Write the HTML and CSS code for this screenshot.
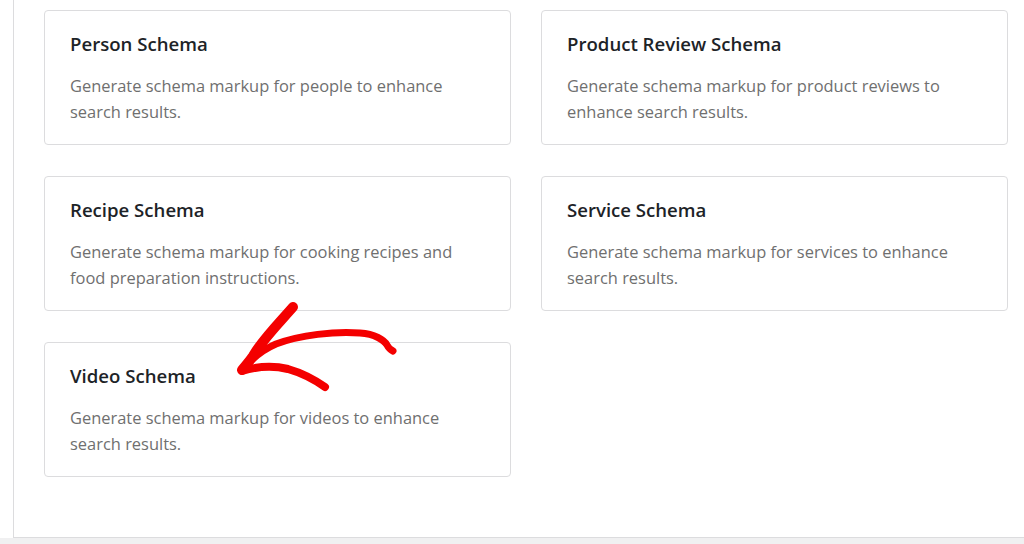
FILE: index.html
```html
<!DOCTYPE html>
<html lang="en">
<head>
<meta charset="utf-8">
<title>Schemas</title>
<link rel="stylesheet" href="styles.css">
</head>
<body>
<div class="page">
  <div class="main">
    <div class="grid">
      <div class="card">
        <h3 class="card-title">Person Schema</h3>
        <p class="card-desc">Generate schema markup for people to enhance search results.</p>
      </div>
      <div class="card">
        <h3 class="card-title">Product Review Schema</h3>
        <p class="card-desc">Generate schema markup for product reviews to enhance search results.</p>
      </div>
      <div class="card">
        <h3 class="card-title">Recipe Schema</h3>
        <p class="card-desc">Generate schema markup for cooking recipes and food preparation instructions.</p>
      </div>
      <div class="card">
        <h3 class="card-title">Service Schema</h3>
        <p class="card-desc">Generate schema markup for services to enhance search results.</p>
      </div>
      <div class="card">
        <h3 class="card-title">Video Schema</h3>
        <p class="card-desc">Generate schema markup for videos to enhance search results.</p>
      </div>
    </div>
  </div>
  <div class="footer-band"></div>
</div>
<svg class="arrow" width="1024" height="544" viewBox="0 0 1024 544" aria-hidden="true">
  <g fill="none" stroke="#f40000" stroke-linecap="round" stroke-linejoin="round">
    <path d="M293 307 C 280 322, 262 340, 253 356 C 249 362, 245 366, 242 370" stroke-width="10"/>
    <path d="M243 370 C 252 358, 262 350, 276 344 C 300 335, 335 331, 360 333 C 375 334, 384 340, 387 345 C 389 349, 391 350, 393 351" stroke-width="7"/>
    <path d="M242 371 C 255 367, 272 365, 288 369 C 302 373, 315 380, 325 387" stroke-width="8"/>
  </g>
</svg>
</body>
</html>
```

FILE: styles.css
```css
html, body {
  margin: 0;
  padding: 0;
  background: #ffffff;
}

body {
  font-family: "Open Sans", "Noto Sans", "Liberation Sans", sans-serif;
  width: 1024px;
  height: 544px;
  overflow: hidden;
  position: relative;
}

.page {
  display: flex;
  flex-direction: column;
  height: 544px;
}

.main {
  height: 538px;
  margin-left: 13px;
  border-left: 1px solid #dcdcde;
  border-bottom: 1px solid #dcdcde;
  box-sizing: border-box;
  padding: 10px 16px 0 30px;
}

.footer-band {
  flex: 1;
  background: #f0f0f1;
}

.grid {
  display: grid;
  grid-template-columns: 467px 467px;
  column-gap: 30px;
  row-gap: 31px;
}

.card {
  border: 1px solid #dcdcde;
  border-radius: 4px;
  height: 135px;
  box-sizing: border-box;
  padding: 20px 25px 0 25px;
  background: #fff;
}

.card-title {
  margin: 0;
  font-size: 18.6px;
  font-weight: 600;
  line-height: 26px;
  color: #1d2327;
}

.card-desc {
  margin: 16px 0 0 0;
  font-size: 16.45px;
  line-height: 26px;
  color: #6f6f6f;
}

.arrow {
  position: absolute;
  left: 0;
  top: 0;
  pointer-events: none;
}
```
